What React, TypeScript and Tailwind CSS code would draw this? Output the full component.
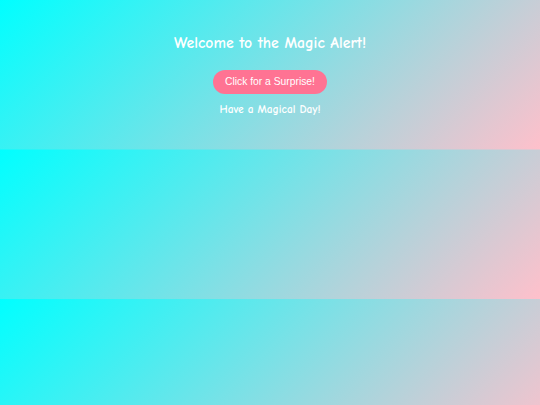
export default function App() {
  return (
    <div className="min-h-screen w-full bg-[linear-gradient(135deg,#00ffff,#ffc0cb)] bg-size-[100%_149.5px] bg-repeat-y">
      <div className="h-[149.5px] flex flex-col items-center pt-[33px] text-white font-['Comic_Sans_MS','Comic_Neue','DejaVu_Sans',sans-serif]">
        <h1 className="text-[15.7px] leading-[20px] font-bold">Welcome to the Magic Alert!</h1>
        <button className="mt-[17px] h-[24px] px-[12px] rounded-full bg-[#ff7393] text-[10.3px] leading-[14px] font-['Liberation_Sans',Arial,sans-serif] text-white">
          Click for a Surprise!
        </button>
        <p className="mt-[8px] text-[11.4px] leading-[15px] font-bold">Have a Magical Day!</p>
      </div>
    </div>
  );
}
